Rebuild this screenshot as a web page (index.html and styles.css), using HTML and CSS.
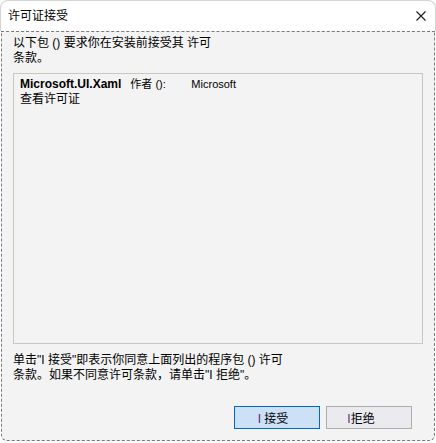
FILE: index.html
```html
<!DOCTYPE html>
<html lang="zh-CN">
<head>
<meta charset="utf-8">
<title>许可证接受</title>
<link rel="stylesheet" href="styles.css">
</head>
<body>
<div class="window">
  <div class="titlebar">
    <span class="title">许可证接受</span>
    <svg class="close" width="10" height="10" viewBox="0 0 10 10"><path d="M0.5 0.5 L9.5 9.5 M9.5 0.5 L0.5 9.5" stroke="#1a1a1a" stroke-width="1.1" fill="none"/></svg>
  </div>
  <div class="content">
    <p class="intro">以下包 () 要求你在安装前接受其 许可<br>条款。</p>
    <div class="listbox">
      <div class="pkg-row">
        <span class="pkg-name">Microsoft.UI.Xaml</span>
        <span class="pkg-author-label">作者 ():</span>
        <span class="pkg-author">Microsoft</span>
      </div>
      <div class="pkg-link">查看许可证</div>
    </div>
    <p class="note">单击"I 接受"即表示你同意上面列出的程序包 () 许可<br>条款。如果不同意许可条款，请单击"I 拒绝"。</p>
    <div class="buttons">
      <button class="btn btn-primary"><span class="label"><span class="key">I</span>&nbsp;接受</span></button>
      <button class="btn btn-secondary"><span class="label"><span class="key">I</span>拒绝</span></button>
    </div>
  </div>
</div>
</body>
</html>
```
FILE: styles.css
```css
* { box-sizing: border-box; }
html, body { margin: 0; padding: 0; background: #ffffff; }
body {
  font-family: "Liberation Sans", "Noto Sans CJK SC", sans-serif;
  font-size: 12px;
  color: #000;
}
.window {
  width: 436px;
  height: 443px;
  display: flex;
  flex-direction: column;
  padding: 0 1px 2px 1px;
}
.titlebar {
  height: 31px;
  flex: none;
  border: 1px solid #d4d4d4;
  border-bottom: 0;
  border-radius: 8px 8px 0 0;
  background: #fff;
  display: flex;
  align-items: center;
  justify-content: space-between;
  padding: 0 9px 0 7px;
  margin: 0 -1px;
}
.title { font-size: 12px; line-height: 15px; padding-top: 1px; }
.close { display: block; margin-top: -1px; }
.content {
  flex: 1;
  border: 1px dashed #7a7a7a;
  border-radius: 0 0 6px 6px;
  background: #f3f3f3;
  display: flex;
  flex-direction: column;
  padding: 4px 11px 11px 11px;
}
.intro, .note {
  margin: 0;
  line-height: 15px;
}
.listbox {
  margin-top: 7px;
  flex: 1;
  border: 1px solid #c8c8bf;
  padding: 3px 6px;
  line-height: 15px;
}
.pkg-row { display: flex; align-items: baseline; }
.pkg-name { font-weight: bold; }
.pkg-author-label { margin-left: 9px; font-size: 11px; width: 61px; }
.pkg-author { font-size: 11px; }
.note { margin-top: 9px; }
.buttons {
  margin-top: 23px;
  margin-right: 11px;
  display: flex;
  justify-content: flex-end;
  gap: 6px;
}
.btn {
  width: 86px;
  height: 23px;
  font-family: "Liberation Sans", "Noto Sans CJK SC", sans-serif;
  font-size: 12px;
  color: #000;
  padding: 0;
  display: flex;
  align-items: center;
  justify-content: center;
}
.btn-primary {
  background: #cce0f6;
  border: 1px solid #0068c6;
  padding-right: 8px;
}
.btn-secondary {
  background: #ebebef;
  border: 1px solid #adadad;
  padding-right: 16px;
}
.key { color: #5a1f7a; }
```
